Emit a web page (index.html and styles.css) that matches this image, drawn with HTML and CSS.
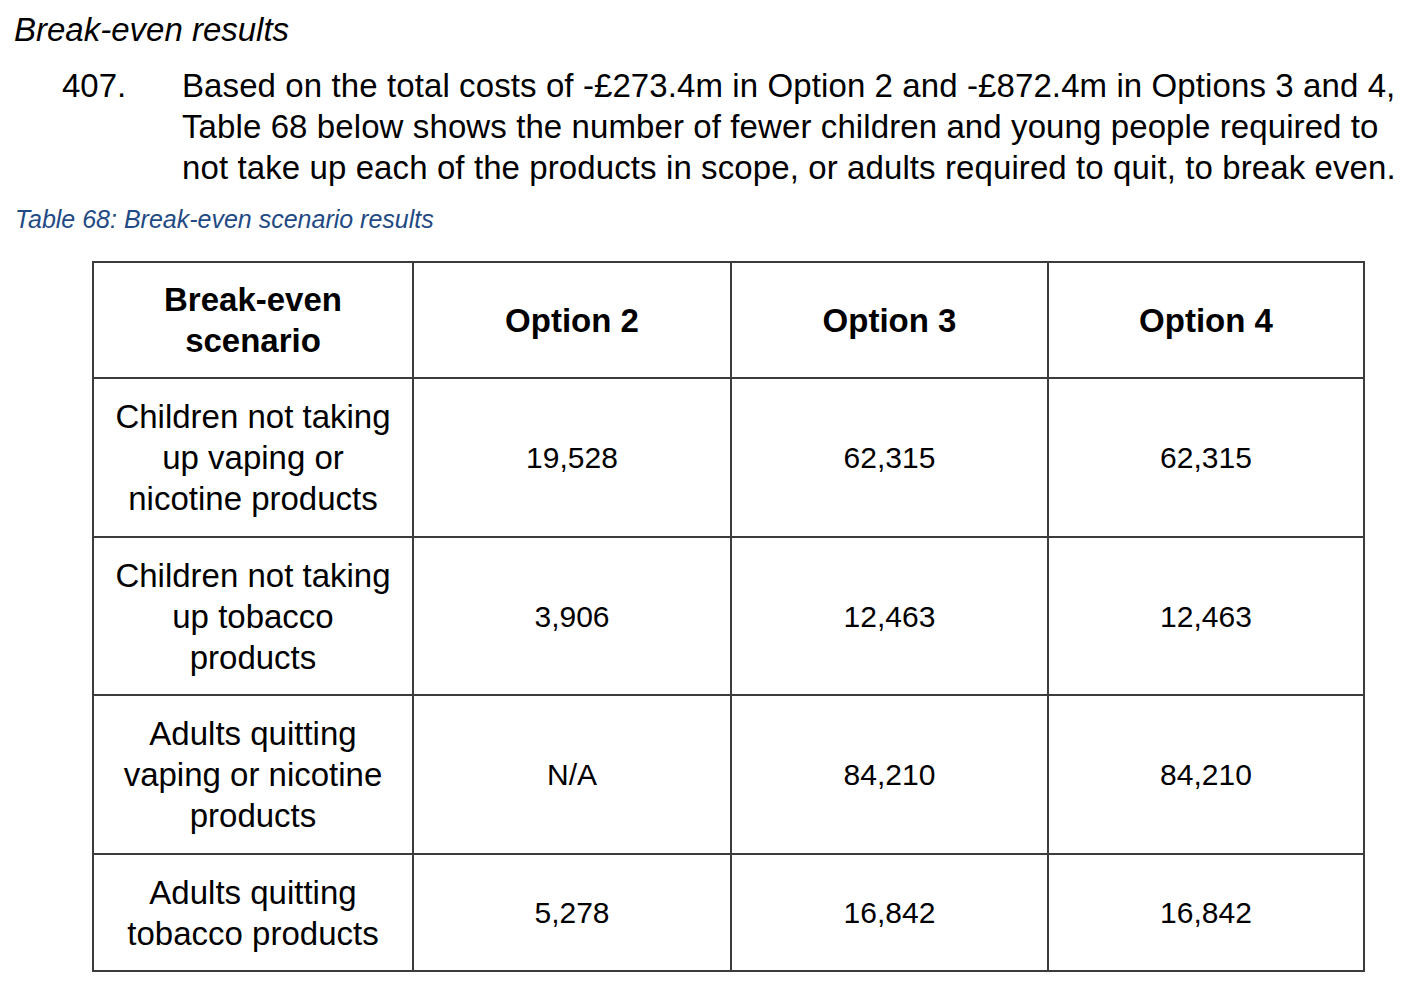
FILE: index.html
```html
<!DOCTYPE html>
<html lang="en">
<head>
<meta charset="utf-8">
<title>Break-even results</title>
<link rel="stylesheet" href="styles.css">
</head>
<body>
<h2 class="section-title">Break-even results</h2>
<div class="para">
  <div class="para-num">407.</div>
  <p class="para-text">Based on the total costs of -£273.4m in Option 2 and -£872.4m in Options 3 and 4,<br>Table 68 below shows the number of fewer children and young people required to<br>not take up each of the products in scope, or adults required to quit, to break even.</p>
</div>
<p class="caption">Table 68: Break-even scenario results</p>
<table class="results">
  <colgroup>
    <col class="c1"><col class="c2"><col class="c3"><col class="c4">
  </colgroup>
  <thead>
    <tr class="row-head">
      <th>Break-even<br>scenario</th>
      <th>Option 2</th>
      <th>Option 3</th>
      <th>Option 4</th>
    </tr>
  </thead>
  <tbody>
    <tr class="row-a">
      <td>Children not taking<br>up vaping or<br>nicotine products</td>
      <td class="num">19,528</td>
      <td class="num">62,315</td>
      <td class="num">62,315</td>
    </tr>
    <tr class="row-b">
      <td>Children not taking<br>up tobacco<br>products</td>
      <td class="num">3,906</td>
      <td class="num">12,463</td>
      <td class="num">12,463</td>
    </tr>
    <tr class="row-a">
      <td>Adults quitting<br>vaping or nicotine<br>products</td>
      <td class="num">N/A</td>
      <td class="num">84,210</td>
      <td class="num">84,210</td>
    </tr>
    <tr class="row-short">
      <td>Adults quitting<br>tobacco products</td>
      <td class="num">5,278</td>
      <td class="num">16,842</td>
      <td class="num">16,842</td>
    </tr>
  </tbody>
</table>
</body>
</html>
```
FILE: styles.css
```css
html, body {
  margin: 0;
  padding: 0;
  background: #ffffff;
}
body {
  font-family: "Liberation Sans", Arial, sans-serif;
  color: #000000;
  font-size: 33px;
  line-height: 41px;
}
.section-title {
  margin: 0;
  padding: 9px 0 0 14px;
  font-size: 33px;
  font-weight: normal;
  font-style: italic;
  line-height: 41px;
}
.para {
  display: flex;
  margin-top: 15px;
}
.para-num {
  flex: none;
  width: 120px;
  padding-left: 62px;
}
.para-text {
  margin: 0;
  white-space: nowrap;
  letter-spacing: 0.1px;
}
.caption {
  margin: 16px 0 0 15px;
  font-size: 25px;
  line-height: 30px;
  font-style: italic;
  color: #1f4a84;
}
.results {
  margin: 27px 0 0 92px;
  border-collapse: collapse;
  table-layout: fixed;
  width: 1271px;
}
.c1 { width: 320px; }
.c2 { width: 318px; }
.c3 { width: 317px; }
.c4 { width: 316px; }
.results th,
.results td {
  border: 2px solid #3c3c3c;
  text-align: center;
  vertical-align: middle;
  padding: 0 6px;
  font-size: 33px;
  line-height: 41px;
  white-space: nowrap;
}
.results th {
  font-weight: bold;
}
.results td.num {
  font-size: 30px;
}
.row-head th { height: 114px; }
.row-a td { height: 157px; }
.row-b td { height: 156px; }
.row-short td { height: 115px; }
```
